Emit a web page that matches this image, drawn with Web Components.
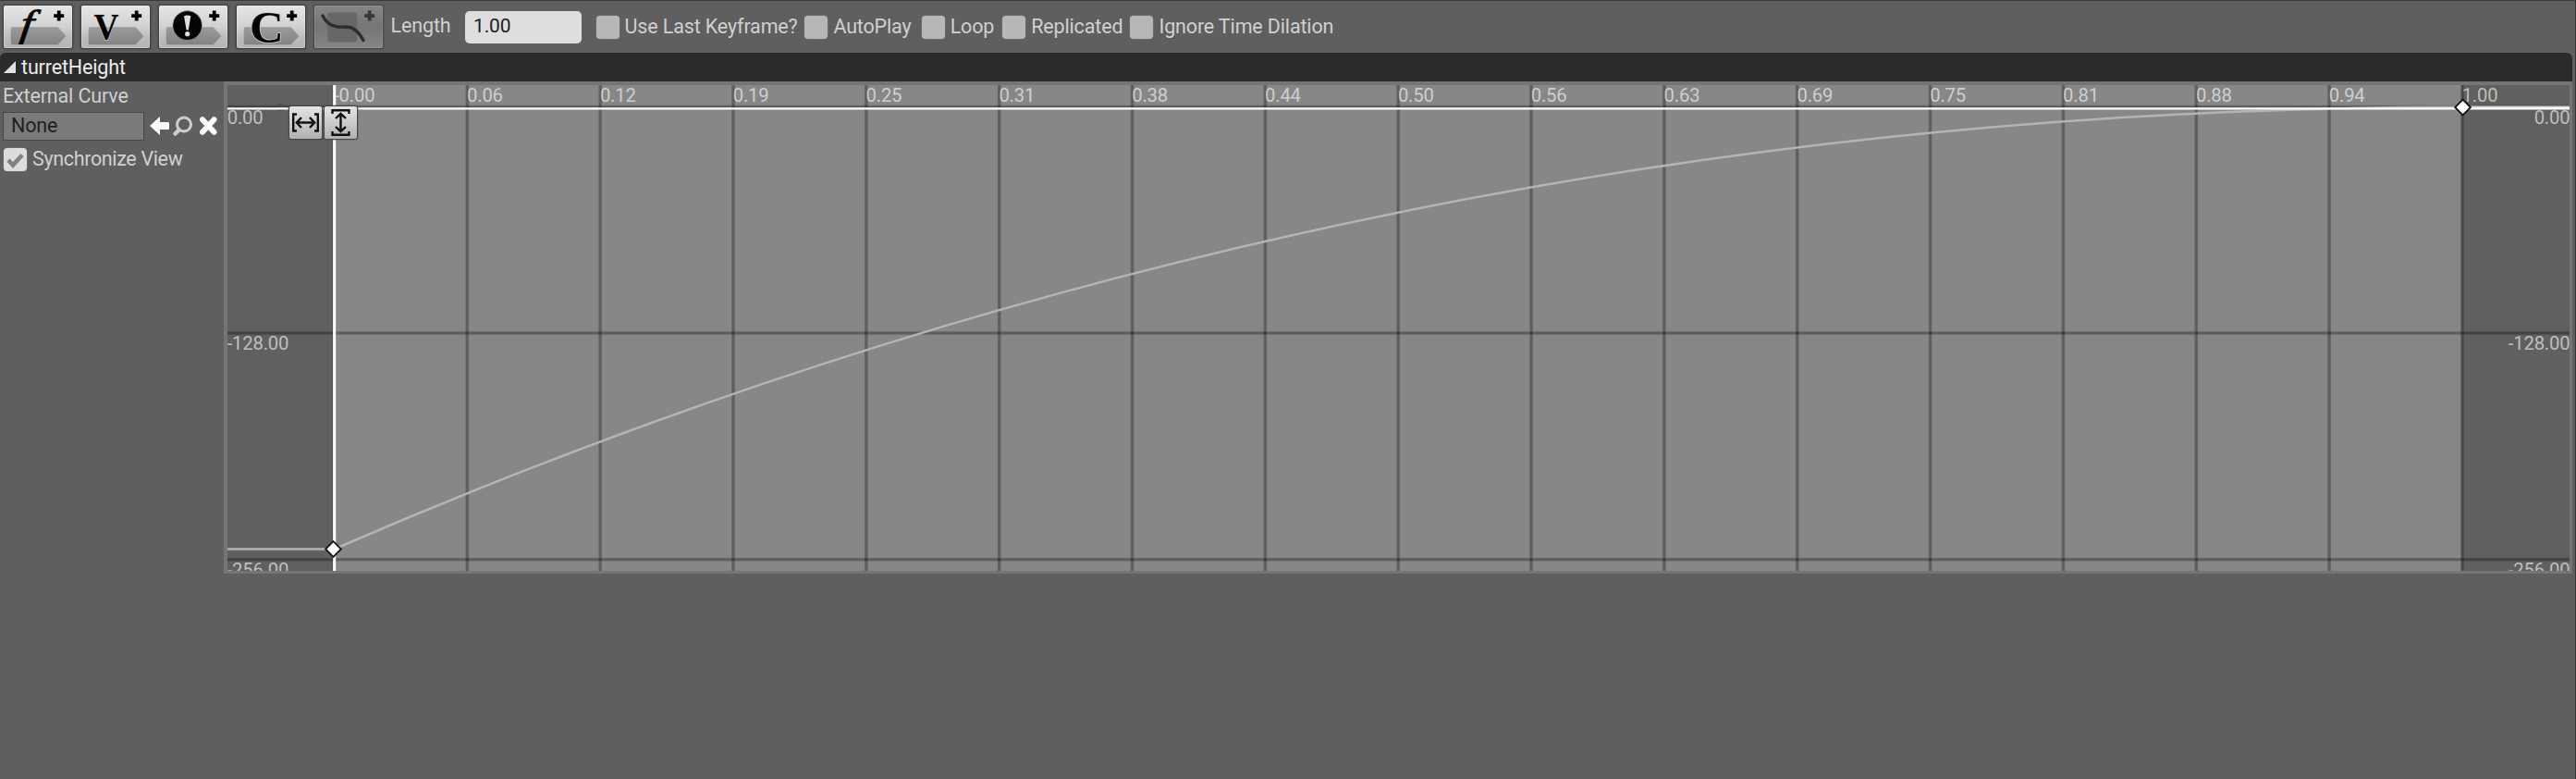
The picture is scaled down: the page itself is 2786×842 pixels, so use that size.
<!DOCTYPE html>
<html lang="en"><head><meta charset="utf-8"><title>Timeline editor</title>
<style>html,body{margin:0;background:#5f5f5f}body{font:21.5px/26px Roboto,sans-serif;letter-spacing:-.15px;color:#d0d0d0;overflow:hidden}</style></head>
<body>
<timeline-editor></timeline-editor>
<script>
const define=(name,html,init)=>customElements.define(name,class extends HTMLElement{
  connectedCallback(){
    if(this.shadowRoot)return;
    const root=this.attachShadow({mode:'open'});
    const t=document.createElement('template');
    t.innerHTML=html;
    root.append(t.content.cloneNode(true));
    if(init)init.call(this,root);
  }
});

define('tool-button',`<style>
:host{display:block;box-sizing:border-box;width:74px;height:46px;border-radius:2px;background:linear-gradient(#e6e6e6,#d2d2d2 48%,#bcbcbc 75%,#b4b4b4);box-shadow:0 0 0 1px #3f3f3f,0 0 3px 1px #444,inset 0 0 0 1px #ffffff40}
:host([disabled]){background:linear-gradient(#858585,#757575 50%,#868686);box-shadow:0 0 0 1px #484848,0 0 2px 1px #505050,inset 0 0 0 1px #ffffff1c}
svg{display:block;overflow:visible}
</style><svg width="74" height="46" viewBox="0 0 74 46"></svg>`,function(root){
  const tag='<defs><linearGradient id="g" x2="0" y2="1"><stop stop-color="#9b9b9b"/><stop offset="1" stop-color="#838383"/></linearGradient></defs><path d="M10 23.3H58.5L67.5 33L58.5 42.2H10Q7.7 42.2 7.7 40V25.6Q7.7 23.3 10 23.3Z" fill="url(#g)"/>';
  const plus='<path d="M57.8 5.6h3.8v3.6h3.6v3.8h-3.6v3.6h-3.8v-3.6h-3.6v-3.8h3.6z" fill="#000"/>';
  const letter='paint-order="stroke" stroke="#ccc" stroke-opacity=".75" stroke-width="2" fill="#050505" font-family="Liberation Serif,serif"';
  const art={
    float:tag+`<text transform="translate(17 33) skewX(-7) scale(1.25 1)" font-size="40.5" font-style="italic" font-family="Liberation Serif,serif" fill="#050505" stroke="#050505" stroke-width=".8">f</text>`,
    vector:tag+`<text transform="translate(13.6 35.9) scale(.91 1)" font-size="41" font-weight="bold" ${letter}>V</text>`,
    event:tag+'<circle cx="30.7" cy="21.6" r="16" fill="#050505" stroke="#ccc" stroke-opacity=".6"/><path d="M27 11.2Q30.7 9.6 34.3 11.2L31.8 26.5H29.6Z" fill="#ddd"/><circle cx="30.7" cy="30.7" r="2.6" fill="#ddd"/>',
    color:tag+`<text transform="translate(14 39.6) scale(1.04 1)" font-size="49" font-weight="bold" ${letter}>C</text>`,
    curve:'<rect x="14.2" y="7.5" width="32" height="32" rx="3" fill="#676767"/><path d="M9 11C13 19 18 22.3 25 23C32 23.5 37 22 42 25C47 28 50.5 33 53 37.5" fill="none" stroke="#2d2d2d" stroke-width="3.4" stroke-linecap="round"/>'+plus.replace('#000','#363636')
  };
  const k=this.getAttribute('kind');
  root.querySelector('svg').innerHTML=art[k]+(k==='curve'?'':plus);
});

define('check-option',`<style>
:host{display:flex;align-items:center;white-space:nowrap}
.box{flex:none;box-sizing:border-box;width:25px;height:25px;margin-right:6px;border-radius:4px;background:#b7b7b7;box-shadow:0 0 0 .5px #777}
:host([checked]) .box{background:#dcdcdc}
.text{margin-top:-2px}
svg{display:none}:host([checked]) svg{display:block}
</style><span class="box"><svg width="25" height="25" viewBox="0 0 25 25"><path d="M5 13L10 18.5L20 7.5" fill="none" stroke="#818181" stroke-width="4.6"/></svg></span><span class="text"><slot></slot></span>`);

define('timeline-toolbar',`<style>
:host{display:flex;box-sizing:border-box;height:57px;padding:0 4px;border-top:1px solid #3b3b3b;background:#5f5f5f}
.tools{display:flex;gap:10px;padding-top:5px}
.length{width:65.4px;margin:14px 0 0 8.6px}
.field{box-sizing:border-box;width:126px;height:35px;margin:10.6px 15.6px 0 15px;padding:3.5px 0 0 9px;border-radius:5px;background:#dedede;color:#202020;font-size:21px;line-height:27px}
check-option{height:25px;margin-top:16px}
</style>
<div class="tools"><tool-button kind="float"></tool-button><tool-button kind="vector"></tool-button><tool-button kind="event"></tool-button><tool-button kind="color"></tool-button><tool-button kind="curve" disabled></tool-button></div>
<span class="length">Length</span><div class="field">1.00</div>
<check-option style="width:225.8px">Use Last Keyframe?</check-option><check-option style="width:126.3px">AutoPlay</check-option><check-option style="width:87.5px">Loop</check-option><check-option style="width:138.3px">Replicated</check-option><check-option>Ignore Time Dilation</check-option>`);

define('track-header',`<style>
:host{display:flex;align-items:center;box-sizing:border-box;width:2782px;height:31px;padding-left:4px;background:#2b2b2b;border-radius:6px 6px 0 0;color:#ededed}
svg{margin-right:6px}
</style><svg width="13" height="13"><path d="M13 0V13H0Z" fill="#e2e2e2"/></svg><span><slot></slot></span>`);

define('curve-settings',`<style>
:host{display:block;width:242px;height:532px;box-sizing:border-box;padding:3px 0 0 3px}
.label{height:26px;margin-bottom:4px}
.pick{display:flex;align-items:center;height:30px;margin-bottom:9px}
.asset{box-sizing:border-box;width:153px;height:31px;margin-right:6px;padding:1px 0 0 8px;border:1.5px solid #484848;background:#7a7a7a;color:#1f1f1f}
svg{display:block}
</style>
<div class="label">External Curve</div>
<div class="pick"><div class="asset">None</div>
<svg width="74" height="24" viewBox="0 0 74 24"><path d="M0 12L11 2V8H19.5Q21 8 21 9.5V14.5Q21 16 19.5 16H11V22Z" fill="#fff"/><circle cx="37" cy="10.5" r="7.5" fill="none" stroke="#cecece" stroke-width="3"/><path d="M31.5 16.5L27.5 20.5" stroke="#cecece" stroke-width="4.5" stroke-linecap="round"/><path d="M57 5.2L69.5 18.8M69.5 5.2L57 18.8" stroke="#fff" stroke-width="6" stroke-linecap="round"/></svg></div>
<check-option checked style="margin-left:1px;letter-spacing:-.35px">Synchronize View</check-option>`);

define('fit-button',`<style>
:host{display:block;width:35px;height:34.6px;border-radius:2px;background:linear-gradient(#e4e4e4,#ccc 50%,#b0b0b0);box-shadow:0 0 0 1px #444,0 0 2px 1px #555}
:host([vertical]) svg{transform:rotate(90deg)}svg{display:block}
</style><svg width="35" height="35" viewBox="0 0 35 35" fill="none" stroke="#101010" stroke-width="2.4"><path d="M8 8.5H4.2V26.5H8M27 8.5H30.8V26.5H27M8.5 17.5H26.5M13 12L7.8 17.5L13 23M22 12L27.2 17.5L22 23"/></svg>`);

define('curve-plot',`<style>
:host{display:block;position:relative;box-sizing:border-box;width:2540px;height:532px;border:3px solid #757575;border-left-width:4px;border-top-width:4px}
.chart{display:block;width:2533px;height:525px}
.fit{position:absolute;left:66.6px;top:23.2px;display:flex;gap:3.6px}
</style><svg class="chart" viewBox="246 92 2533 525"></svg>
<div class="fit"><fit-button></fit-button><fit-button vertical></fit-button></div>`,function(root){
  const x0=361.5,step=143.84;
  let s='<rect x="246" y="92" width="2533" height="526" fill="#606060"/><rect x="361.5" y="92" width="2301" height="526" fill="#878787"/>';
  for(let i=0;i<=16;i++){const x=x0+i*step;s+=`<path d="M${x} 92V618" stroke="#000" stroke-opacity=".25" stroke-width="3.6"/><path d="M${x} 92V618" stroke="#000" stroke-opacity=".09" stroke-width="1.4"/>`}
  for(const y of [115.5,360,604.7])s+=`<path d="M246 ${y}H2779" stroke="#000" stroke-opacity=".25" stroke-width="3.4"/><path d="M246 ${y}H2779" stroke="#000" stroke-opacity=".09" stroke-width="1.4"/>`;
  s+='<path d="M361.7 92V618" stroke="#fff" stroke-width="3.2"/><circle cx="303" cy="116" r="4" fill="#4a4a4a" fill-opacity=".7"/>';
  ['-0.00','0.06','0.12','0.19','0.25','0.31','0.38','0.44','0.50','0.56','0.63','0.69','0.75','0.81','0.88','0.94','1.00'].forEach((t,i)=>s+=`<text x="${x0+i*step-.3}" y="109.8">${t}</text>`);
  [['0.00',134],['-128.00',377.5],['-256.00',622.7]].forEach(([t,y])=>s+=`<text x="245.7" y="${y}">${t}</text><text x="2779.4" y="${y}" text-anchor="end">${t}</text>`);
  s+='<path d="M246 593.5H361.5C1128.7 260.4 1895.8 115.7 2663 115.7" fill="none" stroke="#b4b4b4" stroke-width="2.5"/>';
  s+='<path d="M2663 116H2779" stroke="#d6d6d6" stroke-width="3"/><path d="M246 117.4H2779" stroke="#fff" stroke-width="2.2"/>';
  for(const [x,y] of [[360.5,593.5],[2663.6,116]])s+=`<path d="M${x} ${y-8.4}L${x+8.4} ${y}L${x} ${y+8.4}L${x-8.4} ${y}Z" fill="#fff" stroke="#151515" stroke-width="1.8"/>`;
  const svg=root.querySelector('.chart');
  svg.innerHTML=`<style>text{fill-opacity:.6}</style><g font-family="Roboto,sans-serif" font-size="20.3" letter-spacing="-.2" fill="#fff">${s}</g>`;
});

define('timeline-editor',`<style>
:host{display:flex;flex-direction:column;box-sizing:border-box;width:2786px;height:842px;background:#5f5f5f;border-right:1px solid #343434}
.track{display:flex}
</style><timeline-toolbar></timeline-toolbar><track-header>turretHeight</track-header>
<div class="track"><curve-settings></curve-settings><curve-plot></curve-plot></div>`);
</script>
</body></html>
